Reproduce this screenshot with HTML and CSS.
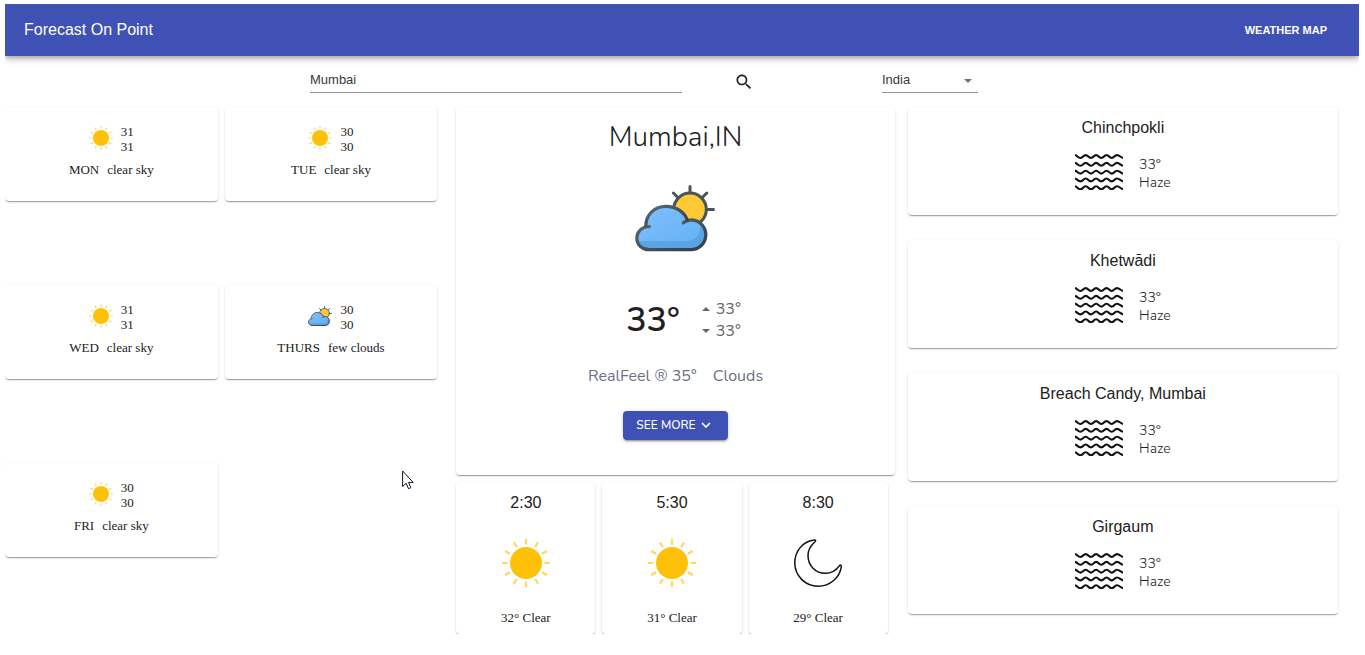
FILE: index.html
```html
<!DOCTYPE html>
<html lang="en">
<head>
<meta charset="utf-8">
<title>Forecast On Point</title>
<link rel="stylesheet" href="styles.css">
</head>
<body>
<svg class="defs" aria-hidden="true">
  <defs>
    <linearGradient id="sky" x1="0" y1="0" x2="1" y2="1">
      <stop offset="0" stop-color="#82bffc"/>
      <stop offset="1" stop-color="#5fb0f3"/>
    </linearGradient>
    <linearGradient id="line" x1="0" y1="0" x2="1" y2="1">
      <stop offset="0" stop-color="#5d6a72"/>
      <stop offset="1" stop-color="#303d46"/>
    </linearGradient>
    <symbol id="sun" viewBox="0 0 48 48">
      <circle cx="24" cy="24" r="16" fill="#ffc107"/>
      <g stroke="#ffd75e" stroke-width="2.2">
        <path id="ray" d="M24 0v5.6M24 42.4V48"/>
        <use href="#ray" transform="rotate(30 24 24)"/>
        <use href="#ray" transform="rotate(60 24 24)"/>
        <use href="#ray" transform="rotate(90 24 24)"/>
        <use href="#ray" transform="rotate(120 24 24)"/>
        <use href="#ray" transform="rotate(150 24 24)"/>
      </g>
    </symbol>
    <symbol id="cloudy" viewBox="0 0 80 80">
      <g stroke="#47545c" stroke-width="3" stroke-linecap="round">
        <path d="M55 8.5V15M72 31.4h6.500M38.400 15l4.200 4.200M71.800 15l-4.200 4.200"/>
        <circle cx="55" cy="31.400" r="16.300" fill="#ffc935"/>
      </g>
      <path d="M10.800 48.500C10.500 37 19 28.300 31 28.300C41 28.300 49.500 34 52.300 42.400C65 39.800 72.300 48 72.300 57A15 15 0 0 1 57 71.700H14C7.500 71.700 2 67 2 60C2 54 5.500 50 10.800 48.500Z" fill="url(#sky)"/>
      <path d="M65 44C73 49 74 60 68.500 67C65.500 70.500 62 71.700 57 71.700H14C8 71.700 4 68.500 2.700 63H52C61 63 67 55 65 44Z" fill="#559dde" opacity=".75"/>
      <g fill="none" stroke="url(#line)" stroke-width="3.200" stroke-linecap="round">
        <path d="M14.300 48.500C7 48.300 1.800 54 1.800 60C1.800 67 7.500 71.700 14 71.700H57A15 15 0 0 0 57 41.800C53.500 41.800 50.500 42.800 48.300 44.800"/>
        <path d="M10.800 48C10.800 37 19 28.300 31 28.300C41 28.300 49.500 34 52.300 42"/>
      </g>
    </symbol>
    <symbol id="moon" viewBox="0 0 48 48">
      <path d="M20.600 1C9 2 .8 12 .8 24A23.300 23.300 0 0 0 24 47.200C36 47.200 46 38.500 47.300 27.500C47.500 26 46.300 25.700 45.500 26.600C42 31.500 37 34.300 31.500 34.300C21.500 34.300 14 26.500 14 16.500C14 11 16.700 6.500 21 2.700C21.900 1.800 21.800 .9 20.600 1Z" fill="none" stroke="#111" stroke-width="1.500"/>
    </symbol>
    <symbol id="haze" viewBox="0 0 48 36">
      <g fill="none" stroke="#111" stroke-width="2.100">
        <path id="wave" d="M0 1C2.200 1.500 3 4 5.500 4C8 4 8.200 1.100 10.700 1.100S13.400 4 16 4S18.600 1.100 21.100 1.100S23.700 4 26.300 4S29 1.100 31.500 1.100S34.200 4 36.700 4S39.400 1.100 42 1.100S45.500 3.500 48 4"/>
        <use href="#wave" y="7.800"/>
        <use href="#wave" y="15.600"/>
        <use href="#wave" y="23.400"/>
        <use href="#wave" y="31.200"/>
      </g>
    </symbol>
  </defs>
</svg>

<header class="bar">
  <div class="brand">Forecast On Point</div>
  <a class="bar-link" href="#">WEATHER MAP</a>
</header>

<form class="search">
  <input class="field city" type="text" value="Mumbai" aria-label="City">
  <button class="search-button" type="button" aria-label="Search">
    <svg width="20" height="20" viewBox="0 0 24 24"><path fill="#222" d="M15.500 14h-.79l-.28-.27C15.410 12.590 16 11.110 16 9.500 16 5.910 13.090 3 9.500 3S3 5.910 3 9.500 5.910 16 9.500 16c1.610 0 3.090-.59 4.230-1.570l.27.280v.79l5 4.990L20.490 19l-4.990-5zm-6 0C7.010 14 5 11.990 5 9.500S7.010 5 9.500 5 14 7.010 14 9.500 11.990 14 9.500 14z"/></svg>
  </button>
  <div class="country">
    <select class="field" aria-label="Country"><option>India</option></select>
    <svg class="caret" width="8" height="4" viewBox="0 0 8 4"><path fill="#757575" d="M0 0h8L4 4z"/></svg>
  </div>
</form>

<main class="columns">
  <section class="week">
    <article class="card day">
      <div class="day-top"><svg class="icon-s"><use href="#sun"/></svg><div>31<br>31</div></div>
      <div class="day-label"><span>MON</span><span>clear sky</span></div>
    </article>
    <article class="card day">
      <div class="day-top"><svg class="icon-s"><use href="#sun"/></svg><div>30<br>30</div></div>
      <div class="day-label"><span>TUE</span><span>clear sky</span></div>
    </article>
    <article class="card day">
      <div class="day-top"><svg class="icon-s"><use href="#sun"/></svg><div>31<br>31</div></div>
      <div class="day-label"><span>WED</span><span>clear sky</span></div>
    </article>
    <article class="card day">
      <div class="day-top"><svg class="icon-s"><use href="#cloudy"/></svg><div>30<br>30</div></div>
      <div class="day-label"><span>THURS</span><span>few clouds</span></div>
    </article>
    <article class="card day">
      <div class="day-top"><svg class="icon-s"><use href="#sun"/></svg><div>30<br>30</div></div>
      <div class="day-label"><span>FRI</span><span>clear sky</span></div>
    </article>
  </section>

  <section class="today">
    <article class="card current">
      <h1 class="place">Mumbai,IN</h1>
      <svg class="icon-l"><use href="#cloudy"/></svg>
      <div class="temps">
        <div class="temp">33°</div>
        <div class="range">
          <div class="range-row"><svg width="8" height="4" viewBox="0 0 8 4"><path fill="#666" d="M0 4h8L4 0z"/></svg>33°</div>
          <div class="range-row"><svg width="8" height="4" viewBox="0 0 8 4"><path fill="#666" d="M0 0h8L4 4z"/></svg>33°</div>
        </div>
      </div>
      <div class="feel"><span>RealFeel ® 35°</span><span>Clouds</span></div>
      <button class="more" type="button">SEE MORE
        <svg width="10" height="6" viewBox="0 0 10 6"><path d="M1 1l4 4 4-4" fill="none" stroke="#fff" stroke-width="1.600"/></svg>
      </button>
    </article>
    <div class="hours">
      <article class="card hour"><div class="sub">2:30</div><svg class="icon-m"><use href="#sun"/></svg><div>32° Clear</div></article>
      <article class="card hour"><div class="sub">5:30</div><svg class="icon-m"><use href="#sun"/></svg><div>31° Clear</div></article>
      <article class="card hour"><div class="sub">8:30</div><svg class="icon-m"><use href="#moon"/></svg><div>29° Clear</div></article>
    </div>
  </section>

  <section class="nearby">
    <article class="card near"><h2 class="sub">Chinchpokli</h2><div class="near-row"><svg class="icon-haze"><use href="#haze"/></svg><div>33°<br>Haze</div></div></article>
    <article class="card near"><h2 class="sub">Khetwādi</h2><div class="near-row"><svg class="icon-haze"><use href="#haze"/></svg><div>33°<br>Haze</div></div></article>
    <article class="card near"><h2 class="sub">Breach Candy, Mumbai</h2><div class="near-row"><svg class="icon-haze"><use href="#haze"/></svg><div>33°<br>Haze</div></div></article>
    <article class="card near"><h2 class="sub">Girgaum</h2><div class="near-row"><svg class="icon-haze"><use href="#haze"/></svg><div>33°<br>Haze</div></div></article>
  </section>
</main>

<svg class="pointer" width="12" height="20" viewBox="0 0 12 20" aria-hidden="true"><path d="M.6 1v15.500l3.500-3.300 2.400 5.500 2.300-1-2.300-5.300h4.700z" fill="#fff" stroke="#112" stroke-width="1"/></svg>
</body>
</html>
```
FILE: styles.css
```css
* { box-sizing: border-box; }

body {
  margin: 4px 6px 0 5px;
  position: relative;
  background: #fff;
  color: #212121;
  font: 13px/16px "Liberation Serif", serif;
}

svg { display: block; flex: none; }
.defs { position: absolute; width: 0; height: 0; }

.bar {
  display: flex;
  align-items: center;
  justify-content: space-between;
  height: 52px;
  padding: 0 32px 0 19px;
  background: #3f51b5;
  color: #fff;
  font-family: "Liberation Sans", sans-serif;
  box-shadow: 0 2px 4px -1px rgba(0, 0, 0, .2), 0 4px 5px rgba(0, 0, 0, .14), 0 1px 10px rgba(0, 0, 0, .12);
}
.brand { font-size: 16px; line-height: 24px; }
.bar-link { color: #fff; font-size: 11px; font-weight: 700; text-decoration: none; }

.search {
  display: grid;
  grid-template-columns: 305fr 372fr 124fr 76fr 96px 381fr;
  align-items: center;
  height: 51px;
  padding-bottom: 2px;
}
.city { grid-column: 2; }
.field {
  width: 100%;
  height: 25px;
  margin: 0;
  padding: 0 0 2px;
  border: 0;
  border-bottom: 1px solid #949494;
  border-radius: 0;
  background: none;
  appearance: none;
  color: #3a3a3a;
  font: 13px "Liberation Sans", sans-serif;
}
.search-button { justify-self: center; padding: 2px 0 0; border: 0; background: none; }
.country { grid-column: 5; position: relative; }
.caret { position: absolute; right: 6px; top: 11px; pointer-events: none; }

.columns {
  display: grid;
  grid-template-columns: repeat(3, 1fr);
  align-items: start;
}

.card {
  border-radius: 4px;
  background: #fff;
  box-shadow: 0 2px 1px -1px rgba(0, 0, 0, .2), 0 1px 1px rgba(0, 0, 0, .14), 0 1px 3px rgba(0, 0, 0, .12);
}
.sub { margin: 0; font: 400 16px/24px "Liberation Sans", sans-serif; }

.icon-s { width: 24px; height: 24px; margin-top: 2px; }
.icon-m { width: 48px; height: 48px; }
.icon-l { width: 80px; height: 80px; }
.icon-haze { width: 48px; height: 36px; margin-top: -2px; }

.week {
  display: grid;
  grid-template-columns: 1fr 1fr;
  gap: 84px 7px;
  padding-right: 19px;
}
.day { padding: 17px 0 23px; }
.day-top { display: flex; justify-content: center; gap: 8px; line-height: 15px; }
.day-label { display: flex; justify-content: center; gap: 8px; margin-top: 8px; }

.today { padding-right: 13px; }
.current {
  display: flex;
  flex-direction: column;
  align-items: center;
  padding: 12px 0 35px;
  font-family: Nunito, Lato, sans-serif;
}
.place { margin: 0 0 23px; font-size: 28px; line-height: 36px; font-weight: 300; }
.temps { display: flex; align-items: center; gap: 22px; margin-top: 40px; padding-left: 16px; }
.temp { font-size: 34px; line-height: 44px; font-weight: 600; }
.range { color: #666; font-size: 16px; line-height: 22px; }
.range-row { display: flex; align-items: center; gap: 6px; }
.feel { display: flex; gap: 16px; margin: 22px 0 23px; color: #6b6f86; font-size: 16px; line-height: 24px; }
.more {
  display: flex;
  align-items: center;
  gap: 5px;
  height: 29px;
  padding: 0 17px 2px 13px;
  border: 0;
  border-radius: 4px;
  background: #3f51b5;
  color: #fff;
  font: 500 12px Nunito, Lato, sans-serif;
  box-shadow: 0 3px 1px -2px rgba(0, 0, 0, .2), 0 2px 2px rgba(0, 0, 0, .14), 0 1px 5px rgba(0, 0, 0, .12);
}

.hours {
  display: grid;
  grid-template-columns: repeat(3, 1fr);
  gap: 7px;
  padding: 7px 7px 0 0;
}
.hour {
  display: flex;
  flex-direction: column;
  align-items: center;
  gap: 24px;
  padding: 9px 0;
  line-height: 14px;
}

.nearby { display: grid; gap: 25px; padding-right: 21px; }
.near { padding: 9px 0 23px; text-align: center; }
.near-row {
  display: flex;
  justify-content: center;
  gap: 16px;
  margin-top: 16px;
  text-align: left;
  font: 300 14px/18px Nunito, Lato, sans-serif;
}

.pointer { position: absolute; left: 397px; top: 466px; }
```
